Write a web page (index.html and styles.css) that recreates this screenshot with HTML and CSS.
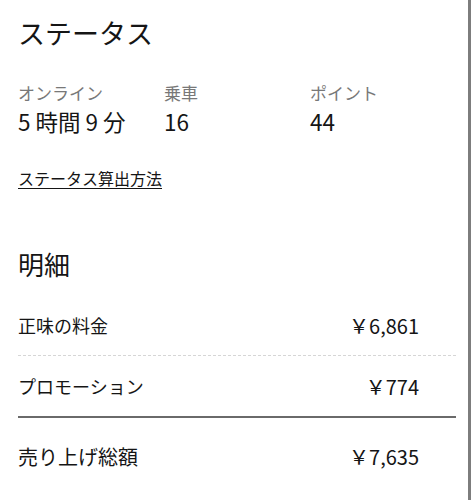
FILE: index.html
```html
<!DOCTYPE html>
<html lang="ja">
<head>
<meta charset="utf-8">
<link rel="stylesheet" href="styles.css">
</head>
<body>
<div class="screen">
  <h1 class="title">ステータス</h1>
  <div class="stats">
    <div class="stat">
      <div class="stat-label">オンライン</div>
      <div class="stat-value">5 時間 9 分</div>
    </div>
    <div class="stat">
      <div class="stat-label">乗車</div>
      <div class="stat-value">16</div>
    </div>
    <div class="stat">
      <div class="stat-label">ポイント</div>
      <div class="stat-value">44</div>
    </div>
  </div>
  <a class="link" href="#">ステータス算出方法</a>
  <h2 class="subtitle">明細</h2>
  <div class="rows">
    <div class="row row-dashed">
      <span class="row-label">正味の料金</span>
      <span class="row-amount">￥6,861</span>
    </div>
    <div class="row row-solid">
      <span class="row-label">プロモーション</span>
      <span class="row-amount">￥774</span>
    </div>
    <div class="row row-total">
      <span class="row-label">売り上げ総額</span>
      <span class="row-amount">￥7,635</span>
    </div>
  </div>
</div>
</body>
</html>
```
FILE: styles.css
```css
html, body {
  margin: 0;
  padding: 0;
  background: #fff;
}
body {
  font-family: "Noto Sans CJK JP", "Noto Sans", sans-serif;
  color: #151515;
}
.screen {
  width: 438px;
  height: 500px;
  padding: 0 12px 0 18px;
  border-right: 3px solid #7d7d7d;
  box-sizing: content-box;
  overflow: hidden;
}
.title {
  margin: 0;
  padding-top: 13px;
  font-size: 27px;
  font-weight: 400;
  line-height: 40px;
}
.stats {
  display: grid;
  grid-template-columns: 146px 146px 1fr;
  margin-top: 28px;
}
.stat-label {
  font-size: 17px;
  line-height: 24px;
  color: #787878;
}
.stat-value {
  margin-top: 2px;
  font-size: 22.5px;
  line-height: 28px;
}
.link {
  display: inline-block;
  margin-top: 32px;
  font-size: 16px;
  line-height: 22px;
  color: #151515;
  text-decoration: underline;
  text-underline-offset: 3px;
}
.subtitle {
  margin: 56px 0 0;
  font-size: 26px;
  font-weight: 400;
  line-height: 36px;
}
.rows {
  margin-top: 13px;
}
.row {
  display: flex;
  justify-content: space-between;
  align-items: center;
  height: 60px;
  padding-right: 37px;
}
.row-dashed {
  border-bottom: 1px dashed #d6d6d6;
}
.row-solid {
  border-bottom: 2px solid #6a6a6a;
}
.row-label {
  font-size: 18px;
}
.row-amount {
  font-size: 20px;
}
.row-total {
  padding-top: 17px;
  height: 42px;
}
.row-total .row-label {
  font-size: 20px;
}
```
